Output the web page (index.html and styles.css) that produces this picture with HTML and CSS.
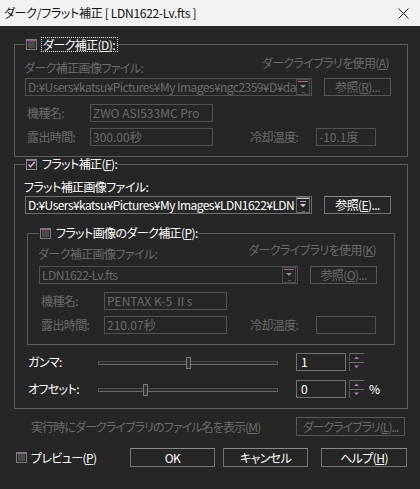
FILE: index.html
```html
<!DOCTYPE html>
<html lang="ja">
<head>
<meta charset="utf-8">
<title>ダーク/フラット補正</title>
<link rel="stylesheet" href="styles.css">
</head>
<body>
<div class="win">
  <div class="titlebar">
    <span class="ttl">ダーク/フラット補正 [ LDN1622-Lv.fts ]</span>
    <svg class="close" width="11" height="11" viewBox="0 0 11 11"><path d="M0.5 0.5 L10.5 10.5 M10.5 0.5 L0.5 10.5" stroke="#111" stroke-width="1" fill="none"/></svg>
  </div>
  <div class="client">
    <fieldset class="grp g1">
      <legend class="lg"><span class="lgin">
        <svg class="chk" width="11" height="11" viewBox="0 0 11 11"><rect x="0.5" y="0.5" width="10" height="10" fill="#2a2a2a" stroke="#7c7c7c"/><rect x="2" y="2" width="7" height="7" fill="#4a4a4a"/><line x1="1" y1="1.5" x2="10" y2="1.5" stroke="#8c5f8c"/></svg>
        <span class="focus">ダーク補正(<u>D</u>):</span>
      </span></legend>
      <div class="labrow">
        <span class="dis l-left">ダーク補正画像ファイル:</span>
        <span class="dis l-right">ダークライブラリを使用(<u>A</u>)</span>
      </div>
      <div class="filerow">
        <div class="combo dcombo dis"><span class="ctext">D:¥Users¥katsu¥Pictures¥My Images¥ngc2359¥D¥da</span>
          <svg class="drop" width="14" height="16" viewBox="0 0 14 16"><rect x="0.5" y="0.5" width="13" height="15" fill="#262626" stroke="#4c4c4c"/><line x1="2" y1="2.5" x2="12" y2="2.5" stroke="#9a6c9a"/><path d="M4 6 L10 6 L7 9 Z" fill="#8a8a8a"/><line x1="6" y1="13.5" x2="9" y2="13.5" stroke="#5a5a5a"/></svg>
        </div>
        <div class="btn dis">参照(<u>R</u>)...</div>
      </div>
      <div class="inforow first">
        <span class="dis key">機種名:</span><div class="field dis">ZWO ASI533MC Pro</div>
      </div>
      <div class="inforow">
        <span class="dis key">露出時間:</span><div class="field dis">300.00秒</div>
        <span class="dis key2 k1">冷却温度:</span><div class="field sm dis">-10.1度</div>
      </div>
    </fieldset>

    <fieldset class="grp g2">
      <legend class="lg"><span class="lgin">
        <svg class="chk" width="11" height="11" viewBox="0 0 11 11"><rect x="0.5" y="0.5" width="10" height="10" fill="#2a2a2a" stroke="#8a8a8a"/><line x1="1" y1="1.5" x2="10" y2="1.5" stroke="#9a6c9a"/><path d="M2.5 5.5 L4.5 7.8 L8.8 2.8" stroke="#d8b0e0" stroke-width="1.4" fill="none"/></svg>
        <span class="lgtext">フラット補正(<u>F</u>):</span>
      </span></legend>
      <div class="flabel">フラット補正画像ファイル:</div>
      <div class="filerow f2">
        <div class="combo en"><span class="ctext">D:¥Users¥katsu¥Pictures¥My Images¥LDN1622¥LDN</span>
          <svg class="drop" width="14" height="16" viewBox="0 0 14 16"><rect x="0.5" y="0.5" width="13" height="15" fill="#262626" stroke="#6a6a6a"/><line x1="1" y1="1.5" x2="13" y2="1.5" stroke="#bdbdbd"/><line x1="4" y1="4.5" x2="10" y2="4.5" stroke="#c78ec7"/><path d="M4 7 L10 7 L7 10 Z" fill="#e0d0e8"/><line x1="6" y1="14.5" x2="9" y2="14.5" stroke="#6a6a6a"/></svg>
        </div>
        <div class="btn en">参照(<u>E</u>)...</div>
      </div>

      <fieldset class="grp inner">
        <legend class="lg"><span class="lgin">
          <svg class="chk" width="11" height="11" viewBox="0 0 11 11"><rect x="0.5" y="0.5" width="10" height="10" fill="#2a2a2a" stroke="#7c7c7c"/><rect x="2" y="2" width="7" height="7" fill="#4a4a4a"/><line x1="1" y1="1.5" x2="10" y2="1.5" stroke="#8c5f8c"/></svg>
          <span class="lgtext">フラット画像のダーク補正(<u>P</u>):</span>
        </span></legend>
        <div class="labrow ilab">
          <span class="dis l-left">ダーク補正画像ファイル:</span>
          <span class="dis l-right">ダークライブラリを使用(<u>K</u>)</span>
        </div>
        <div class="filerow">
          <div class="combo icombo dis"><span class="ctext">LDN1622-Lv.fts</span>
            <svg class="drop" width="14" height="16" viewBox="0 0 14 16"><rect x="0.5" y="0.5" width="13" height="15" fill="#262626" stroke="#4c4c4c"/><line x1="2" y1="2.5" x2="12" y2="2.5" stroke="#9a6c9a"/><path d="M4 6 L10 6 L7 9 Z" fill="#8a8a8a"/><line x1="6" y1="13.5" x2="9" y2="13.5" stroke="#5a5a5a"/></svg>
          </div>
          <div class="btn dis">参照(<u>O</u>)...</div>
        </div>
        <div class="inforow first">
          <span class="dis key">機種名:</span><div class="field dis">PENTAX K-5 Ⅱs</div>
        </div>
        <div class="inforow">
          <span class="dis key">露出時間:</span><div class="field dis">210.07秒</div>
          <span class="dis key2 k2">冷却温度:</span><div class="field sm dis"></div>
        </div>
      </fieldset>

      <div class="srow r1">
        <span class="slabel">ガンマ:</span>
        <div class="slider"><div class="track"></div><div class="thumb" style="left:88px"></div></div>
        <div class="sfield">1</div>
        <svg class="spin" width="15" height="18" viewBox="0 0 15 18"><line x1="0" y1="0.5" x2="15" y2="0.5" stroke="#6a6a6a"/><line x1="0.5" y1="0" x2="0.5" y2="8" stroke="#5a5a5a"/><path d="M5 6 L10 6 L7.5 3.5 Z" fill="#b07ab8"/><line x1="0" y1="9.5" x2="15" y2="9.5" stroke="#6a6a6a"/><line x1="0.5" y1="9" x2="0.5" y2="18" stroke="#5a5a5a"/><path d="M5 12.5 L10 12.5 L7.5 15 Z" fill="#b07ab8"/></svg>
      </div>
      <div class="srow r2">
        <span class="slabel">オフセット:</span>
        <div class="slider"><div class="track"></div><div class="thumb" style="left:45px"></div></div>
        <div class="sfield">0</div>
        <svg class="spin" width="15" height="18" viewBox="0 0 15 18"><line x1="0" y1="0.5" x2="15" y2="0.5" stroke="#6a6a6a"/><line x1="0.5" y1="0" x2="0.5" y2="8" stroke="#5a5a5a"/><path d="M5 6 L10 6 L7.5 3.5 Z" fill="#b07ab8"/><line x1="0" y1="9.5" x2="15" y2="9.5" stroke="#6a6a6a"/><line x1="0.5" y1="9" x2="0.5" y2="18" stroke="#5a5a5a"/><path d="M5 12.5 L10 12.5 L7.5 15 Z" fill="#b07ab8"/></svg>
        <span class="pct">%</span>
      </div>
    </fieldset>

    <div class="brow1">
      <span class="dis showlbl">実行時にダークライブラリのファイル名を表示(<u>M</u>)</span>
      <div class="btn dis libbtn">ダークライブラリ(<u>L</u>)...</div>
    </div>
    <div class="brow2">
      <svg class="chk pchk" width="11" height="11" viewBox="0 0 11 11"><rect x="0.5" y="0.5" width="10" height="10" fill="#2a2a2a" stroke="#7c7c7c"/><rect x="2" y="2" width="7" height="7" fill="#4a4a4a"/><line x1="1" y1="1.5" x2="10" y2="1.5" stroke="#8c5f8c"/></svg>
      <span class="plabel">プレビュー(<u>P</u>)</span>
      <div class="btn en okbtn">OK</div>
      <div class="btn en cbtn">キャンセル</div>
      <div class="btn en hbtn">ヘルプ(<u>H</u>)</div>
    </div>
  </div>
</div>
</body>
</html>
```

FILE: styles.css
```css
* { box-sizing: border-box; }
html, body { margin: 0; padding: 0; }
body {
  width: 420px;
  height: 489px;
  overflow: hidden;
  background: #262626;
  font-family: "Noto Sans CJK JP", "Noto Sans", sans-serif;
  font-size: 12px;
  line-height: 14px;
  color: #ffffff;
  font-feature-settings: "palt";
  letter-spacing: -0.6px;
}
u { text-decoration: underline; text-underline-offset: 1px; }

.win { width: 420px; height: 489px; }

.titlebar {
  height: 26px;
  background: #f2f2f2;
  color: #111;
  display: flex;
  align-items: center;
  justify-content: space-between;
  padding: 0 11px 0 4px;
}
.ttl { font-size: 12px; letter-spacing: -0.3px; }
.close { display: block; }

.client { padding: 11px 0 0 14px; }

.dis { color: #6b6b6b; }

fieldset.grp {
  margin: 0;
  min-width: 0;
  border: 1px solid #5c5c5c;
  padding: 0 13px 10px 10px;
}
.g1 { width: 394px; }
.g2 { width: 394px; margin-top: 6px; padding-bottom: 12px; }

legend.lg { padding: 0 0 0 1px; margin: 0; height: 14px; }
.lgin { display: inline-flex; align-items: center; height: 14px; gap: 5px; }
.chk { display: block; flex: none; }
.focus { outline: 1px dotted #ffffff; outline-offset: 0; padding: 0 2px 0 1px; line-height: 13px; }
.lgtext { line-height: 14px; }

.labrow { display: flex; justify-content: space-between; height: 27px; }
.labrow .l-left { margin-top: 10px; margin-left: -1px; }
.labrow .l-right { margin-top: 5px; margin-right: 5px; }
.labrow.ilab { height: 26px; }
.ilab .l-left { margin-top: 7px; }
.ilab .l-right { margin-top: 3px; margin-right: 2px; }

.filerow { display: flex; gap: 12px; height: 18px; }
.filerow.f2 { margin-top: 2px; }

.combo {
  height: 18px;
  border: 1px solid #505050;
  display: flex;
  align-items: center;
  padding-left: 2px;
}
.combo.dcombo { width: 287px; }
.combo.en { width: 287px; border-color: #6e6e6e; color: #fff; }
.combo.icombo { width: 259px; }
.ctext { flex: 1; min-width: 0; white-space: nowrap; letter-spacing: -0.55px; }
.drop { display: block; flex: none; margin-right: 1px; }

.btn {
  width: 67px;
  height: 18px;
  border: 1px solid #6a6a6a;
  display: flex;
  align-items: center;
  justify-content: center;
  flex: none;
  white-space: nowrap;
}
.btn.dis { border-color: #575757; }
.btn.en { border-color: #727272; border-top-color: #8a8a8a; color: #fff; }

.flabel { margin-top: 9px; height: 14px; margin-left: -1px; }

.inforow { display: flex; align-items: center; height: 18px; margin-top: 6px; }
.inforow.first { margin-top: 8px; }
.key { width: 63px; margin-left: 2px; }
.key2 { width: 66px; }
.key2.k1 { margin-left: 37px; }
.key2.k2 { margin-left: 23px; }
.field {
  width: 123px;
  height: 18px;
  border: 1px solid #525252;
  padding-left: 2px;
  display: flex;
  align-items: center;
  white-space: nowrap;
  letter-spacing: 0;
}
.field.sm { width: 60px; }

fieldset.inner {
  margin: 12px 0 0 2px;
  width: 368px;
  padding: 0 16px 10px 11px;
}

.srow { display: flex; align-items: center; height: 18px; }
.srow.r1 { margin-top: 8px; }
.srow.r2 { margin-top: 9px; }
.slabel { width: 70px; margin-left: 3px; }
.slider { width: 180px; height: 18px; position: relative; }
.track {
  margin-top: 8px;
  height: 4px;
  background: #2c2c2c;
  border-top: 1px solid #4e4e4e;
  border-bottom: 1px solid #6a6a6a;
  border-left: 1px solid #555;
  border-right: 1px solid #555;
}
.thumb {
  position: absolute;
  top: 4px;
  width: 5px;
  height: 12px;
  background: #333;
  border: 1px solid #7a7a7a;
}
.sfield {
  width: 50px;
  height: 18px;
  margin-left: 18px;
  border: 1px solid #717171;
  padding-left: 4px;
  display: flex;
  align-items: center;
  letter-spacing: 0;
}
.spin { display: block; margin-left: 3px; flex: none; }
.pct { margin-left: 5px; }

.brow1 {
  display: flex;
  align-items: center;
  justify-content: space-between;
  width: 391px;
  height: 19px;
  margin-top: 8px;
}
.showlbl { margin-left: 17px; white-space: nowrap; letter-spacing: -0.9px; }
.btn.libbtn { width: 109px; height: 19px; letter-spacing: -1px; }

.brow2 {
  display: flex;
  align-items: center;
  width: 393px;
  height: 19px;
  margin-top: 12px;
}
.pchk { margin-left: 2px; }
.plabel { margin-left: 4px; }
.okbtn { margin-left: auto; width: 85px; height: 19px; }
.cbtn { margin-left: 8px; width: 85px; height: 19px; }
.hbtn { margin-left: 13px; width: 86px; height: 19px; }
```
